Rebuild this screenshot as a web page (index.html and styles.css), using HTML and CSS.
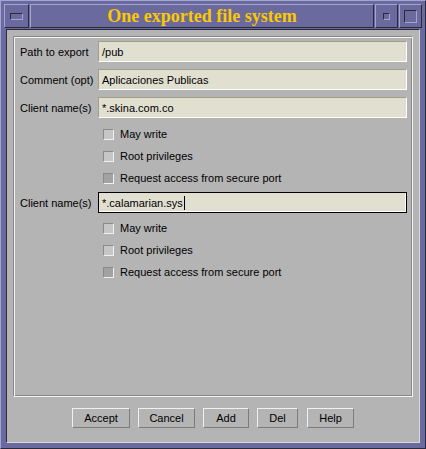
FILE: index.html
```html
<!DOCTYPE html>
<html>
<head>
<meta charset="utf-8">
<link rel="stylesheet" href="styles.css">
</head>
<body>
<div class="window">
  <div class="titlebar">
    <div class="tbtn menu"><span class="menu-mark"></span></div>
    <div class="title">One exported file system</div>
    <div class="tbtn min"><span class="min-mark"></span></div>
    <div class="tbtn max"><span class="max-mark"></span></div>
  </div>
  <div class="content">
    <div class="group">
      <div class="row field-row r1">
        <span class="label">Path to export</span>
        <div class="field">/pub</div>
      </div>
      <div class="row field-row r2">
        <span class="label">Comment (opt)</span>
        <div class="field">Aplicaciones Publicas</div>
      </div>
      <div class="row field-row r3">
        <span class="label">Client name(s)</span>
        <div class="field">*.skina.com.co</div>
      </div>
      <div class="checks c1">
        <div class="check-row"><span class="box"></span><span>May write</span></div>
        <div class="check-row"><span class="box"></span><span>Root privileges</span></div>
        <div class="check-row"><span class="box dim"></span><span>Request access from secure port</span></div>
      </div>
      <div class="row field-row r4">
        <span class="label">Client name(s)</span>
        <div class="field focused">*.calamarian.sys<span class="caret"></span></div>
      </div>
      <div class="checks c2">
        <div class="check-row"><span class="box"></span><span>May write</span></div>
        <div class="check-row"><span class="box"></span><span>Root privileges</span></div>
        <div class="check-row"><span class="box dim"></span><span>Request access from secure port</span></div>
      </div>
    </div>
    <div class="buttons">
      <button class="btn b-accept">Accept</button>
      <button class="btn b-cancel">Cancel</button>
      <button class="btn b-add">Add</button>
      <button class="btn b-del">Del</button>
      <button class="btn b-help">Help</button>
    </div>
  </div>
</div>
</body>
</html>
```
FILE: styles.css
```css
html, body {
  margin: 0;
  padding: 0;
}
body {
  width: 426px;
  height: 449px;
  background: #6a6a9e;
  font-family: "Liberation Sans", Arial, sans-serif;
  font-size: 11px;
  color: #000;
  overflow: hidden;
}
.window {
  box-sizing: border-box;
  width: 426px;
  height: 449px;
  border: 1px solid;
  border-color: #a4a4d4 #2a2a3a #2a2a3a #a4a4d4;
  padding: 3px 3px 5px 3px;
  display: flex;
  flex-direction: column;
}
.titlebar {
  height: 24px;
  display: flex;
  gap: 1px;
  margin-bottom: 1px;
}
.tbtn, .title {
  box-sizing: border-box;
  height: 24px;
  background: #6a6a9e;
  border: 1px solid;
  border-color: #a4a4d4 #2a2a3a #2a2a3a #a4a4d4;
  display: flex;
  align-items: center;
  justify-content: center;
}
.menu { width: 25px; }
.min { width: 23px; }
.max { width: 23px; }
.title {
  flex: 1;
  font-family: "Liberation Serif", "Times New Roman", serif;
  font-weight: bold;
  font-size: 18px;
  color: #fcc800;
  padding-top: 1px;
}
.menu-mark {
  width: 11px;
  height: 5px;
  border: 1px solid;
  border-color: #2a2a3a #a4a4d4 #a4a4d4 #2a2a3a;
}
.min-mark {
  width: 5px;
  height: 5px;
  border: 1px solid;
  border-color: #2a2a3a #a4a4d4 #a4a4d4 #2a2a3a;
}
.max-mark {
  width: 11px;
  height: 11px;
  border: 1px solid;
  border-color: #2a2a3a #a4a4d4 #a4a4d4 #2a2a3a;
}
.content {
  flex: 1;
  margin: 0 2px;
  background: #b4b4b4;
  border: 1px solid;
  border-color: #2a2a3a #d8d8d8 #d8d8d8 #2a2a3a;
  display: flex;
  flex-direction: column;
  padding: 6px 6px 14px 6px;
}
.group {
  flex: 1;
  border: 1px solid;
  border-color: #888888 #f4f4f4 #f4f4f4 #888888;
  box-shadow: inset 1px 1px 0 #f4f4f4, inset -1px -1px 0 #888888;
  padding: 4px 5px 0 6px;
}
.row {
  display: flex;
  align-items: center;
}
.label {
  width: 78px;
  flex: none;
}
.field {
  box-sizing: border-box;
  flex: 1;
  height: 21px;
  background: #e0dfd0;
  border: 1px solid;
  border-color: #a09f88 #ffffff #ffffff #a09f88;
  padding-left: 3px;
  display: flex;
  align-items: center;
}
.field.focused {
  border: 1px solid #000;
  box-shadow: inset -1px -1px 0 #ffffff;
}
.caret {
  display: inline-block;
  width: 1px;
  height: 14px;
  background: #000;
  margin-left: 1px;
}
.r1 { margin-bottom: 7px; }
.r2 { margin-bottom: 7px; }
.c1 { margin-top: 5px; margin-bottom: 3px; }
.c2 { margin-top: 4px; }
.checks {
  padding-left: 83px;
}
.check-row {
  height: 22px;
  display: flex;
  align-items: center;
  gap: 6px;
}
.box {
  box-sizing: border-box;
  width: 11px;
  height: 11px;
  background: #c6c6c6;
  border: 1px solid;
  border-color: #8a8a8a #f0f0f0 #f0f0f0 #8a8a8a;
}
.box.dim {
  background: #a2a2a2;
}
.buttons {
  margin-top: 11px;
  display: flex;
  justify-content: center;
  gap: 8px;
}
.btn {
  box-sizing: border-box;
  height: 20px;
  padding: 0;
  margin: 0;
  background: #b4b4b4;
  border: 1px solid;
  border-color: #f0f0f0 #7c7c7c #7c7c7c #f0f0f0;
  font-family: "Liberation Sans", Arial, sans-serif;
  font-size: 11px;
  color: #000;
}
.b-accept { width: 58px; }
.b-cancel { width: 57px; }
.b-add { width: 46px; }
.b-del { width: 41px; }
.b-help { width: 47px; margin-left: 1px; }
```
